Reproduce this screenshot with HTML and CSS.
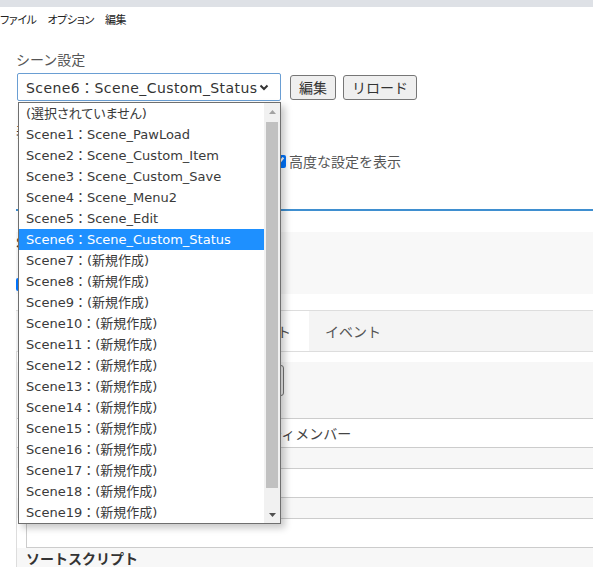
FILE: index.html
```html
<!DOCTYPE html>
<html lang="ja">
<head>
<meta charset="utf-8">
<title>シーン設定</title>
<link rel="stylesheet" href="styles.css">
</head>
<body>
<div class="topbar"></div>
<nav class="menu"><span>ファイル</span><span>オプション</span><span>編集</span></nav>
<main class="page">
  <div class="scene-label">シーン設定</div>
  <div class="scene-row">
    <div class="select-wrap">
      <div class="select">
        <span class="select-text">Scene6：Scene_Custom_Status</span>
        <svg class="chev" width="10" height="7" viewBox="0 0 10 7"><path d="M1.5 1.5 L5 5 L8.5 1.5" fill="none" stroke="#333" stroke-width="2"/></svg>
      </div>
      <div class="dropdown">
        <div class="opts">
          <div class="opt opt-none">(選択されていません)</div>
          <div class="opt">Scene1：Scene_PawLoad</div>
          <div class="opt">Scene2：Scene_Custom_Item</div>
          <div class="opt">Scene3：Scene_Custom_Save</div>
          <div class="opt">Scene4：Scene_Menu2</div>
          <div class="opt">Scene5：Scene_Edit</div>
          <div class="opt sel">Scene6：Scene_Custom_Status</div>
          <div class="opt">Scene7：(新規作成)</div>
          <div class="opt">Scene8：(新規作成)</div>
          <div class="opt">Scene9：(新規作成)</div>
          <div class="opt">Scene10：(新規作成)</div>
          <div class="opt">Scene11：(新規作成)</div>
          <div class="opt">Scene12：(新規作成)</div>
          <div class="opt">Scene13：(新規作成)</div>
          <div class="opt">Scene14：(新規作成)</div>
          <div class="opt">Scene15：(新規作成)</div>
          <div class="opt">Scene16：(新規作成)</div>
          <div class="opt">Scene17：(新規作成)</div>
          <div class="opt">Scene18：(新規作成)</div>
          <div class="opt">Scene19：(新規作成)</div>
        </div>
        <div class="sb">
          <div class="sb-btn"><svg width="7" height="4" viewBox="0 0 7 4"><path d="M0 4 L3.5 0 L7 4Z" fill="#a3a3a3"/></svg></div>
          <div class="sb-track"><div class="sb-thumb"></div></div>
          <div class="sb-btn"><svg width="7" height="4" viewBox="0 0 7 4"><path d="M0 0 L3.5 4 L7 0Z" fill="#505050"/></svg></div>
        </div>
      </div>
    </div>
    <button class="btn">編集</button>
    <button class="btn">リロード</button>
  </div>

  <div class="opt-title">表示オプション</div>
  <div class="checks">
    <label class="chk"><input type="checkbox" checked>シーン名を表示する</label>
    <label class="chk"><input type="checkbox" checked>高度な設定を表示</label>
  </div>

  <div class="main-tabs"></div>

  <section class="info">
    <div class="info-title">Scene_Custom_Status</div>
    <label class="chk info-chk"><input type="checkbox" checked>有効</label>
  </section>

  <div class="tabs">
    <div class="tab tab-first">基本設定</div>
    <div class="tab active">スクリプト</div>
    <div class="tab">イベント</div>
  </div>

  <div class="tab-body">
    <div class="toolbar"><button class="btn tool-btn">メンバーを追加</button></div>
    <div class="row-white"><span class="row-text">パーティメンバー</span></div>
    <div class="row-gray"></div>
    <div class="field"></div>
    <div class="row-gray"></div>
    <div class="field"></div>
    <div class="row-label"><span class="field-label">ソートスクリプト</span></div>
  </div>
</main>
</body>
</html>
```

FILE: styles.css
```css
* { box-sizing: border-box; }
html, body { margin: 0; height: 100%; overflow: hidden; }
body {
  font-family: "Noto Sans CJK JP", "DejaVu Sans", sans-serif;
  color: #333;
  background: #fff;
}
.topbar { height: 7px; background: #dee1e6; }
.menu {
  display: flex;
  gap: 11px;
  height: 24px;
  align-items: center;
  font-size: 11px;
  letter-spacing: -0.4px;
  color: #222;
  font-feature-settings: "palt";
}
.page { padding-left: 16px; }
.scene-label {
  margin-top: 18px;
  font-size: 14px;
  line-height: 20px;
  color: #555;
}
.scene-row {
  display: flex;
  align-items: center;
  margin-top: 4px;
}
.select-wrap {
  position: relative;
  width: 264px;
  margin-left: 1px;
  z-index: 10;
}
.select {
  height: 28px;
  border: 1px solid #6a9ed3;
  border-radius: 2px;
  display: flex;
  align-items: center;
  justify-content: space-between;
  padding: 0 11px 0 8px;
  color: #333;
}
.select-text {
  white-space: nowrap;
  font-family: "DejaVu Sans", "Noto Sans CJK JP", sans-serif;
  font-size: 14px;
  letter-spacing: 0.42px;
}
.dropdown {
  position: absolute;
  top: 29px;
  left: 1px;
  width: 263px;
  height: 422px;
  border: 1px solid #6f6f6f;
  background: #fff;
  box-shadow: 4px 4px 7px rgba(0, 0, 0, 0.22);
  display: flex;
}
.opts { flex: 1; }
.opt {
  height: 21px;
  line-height: 21px;
  padding-left: 7px;
  font-family: "DejaVu Sans", "Noto Sans CJK JP", sans-serif;
  font-size: 13px;
  color: #3a3a3a;
  white-space: nowrap;
}
.opt-none { font-feature-settings: "palt"; }
.opt.sel { background: #1e90ff; color: #fff; }
.sb {
  width: 16px;
  background: #f1f1f1;
  display: flex;
  flex-direction: column;
}
.sb-btn {
  height: 17px;
  display: flex;
  align-items: center;
  justify-content: center;
}
.sb-track { flex: 1; padding: 2px 2px 0; }
.sb-thumb { height: 366px; background: #c1c1c1; }
.btn {
  font-family: inherit;
  font-size: 14px;
  color: #333;
  background: #efefef;
  border: 1px solid #767676;
  border-radius: 3px;
  height: 25px;
  padding: 0 8px;
  margin-left: 7px;
  line-height: 1;
}
.select-wrap + .btn { margin-left: 9px; }
.opt-title {
  margin-top: 20px;
  font-size: 14px;
  line-height: 20px;
  color: #333;
}
.checks {
  display: flex;
  gap: 14px;
  margin-top: 10px;
  padding-left: 8px;
}
.chk {
  display: flex;
  align-items: center;
  font-size: 14px;
  line-height: 20px;
  color: #555;
}
.chk input {
  width: 13px;
  height: 13px;
  margin: 0 3px 0 0;
  accent-color: #0075ff;
}
.checks .chk:first-child { width: 235px; flex-shrink: 0; }
.main-tabs {
  margin-top: 38px;
  height: 2px;
  background: #3f8fd0;
}
.info {
  margin-top: 21px;
  height: 62px;
  background: #f8f8f8;
  display: flex;
  flex-direction: column;
}
.info-title { font-size: 15px; font-weight: bold; line-height: 20px; color: #333; }
.info-chk { margin-top: 22px; }
.tabs {
  margin-top: 16px;
  display: flex;
  border-top: 1px solid #ddd;
  border-bottom: 1px solid #ddd;
  background: #f4f4f4;
  height: 42px;
}
.tab {
  display: flex;
  align-items: center;
  padding: 0 17px 0 16px;
  font-size: 14px;
  color: #555;
}
.tab-first { width: 189px; }
.tab.active { background: #fff; width: 104px; }
.tab-body {
  border-left: 1px solid #ddd;
  padding-top: 10px;
}
.toolbar {
  height: 56px;
  background: #f7f7f7;
  padding-top: 3px;
  display: flex;
}
.tool-btn { height: 31px; margin-left: 160px; width: 107px; }
.row-white {
  height: 30px;
  border-top: 1px solid #ccc;
  border-bottom: 1px solid #ccc;
  display: flex;
  align-items: center;
  font-size: 14px;
  color: #444;
}
.row-text { padding-left: 223px; }
.row-gray {
  height: 20px;
  background: #f7f7f7;
}
.row-label {
  background: #f7f7f7;
  padding-left: 9px;
  line-height: 18px;
}
.field {
  height: 30px;
  margin-left: 9px;
  border: 1px solid #ccc;
  border-right: 0;
  background: #fff;
}
.field-label { font-size: 14px; font-weight: bold; color: #333; }
```
